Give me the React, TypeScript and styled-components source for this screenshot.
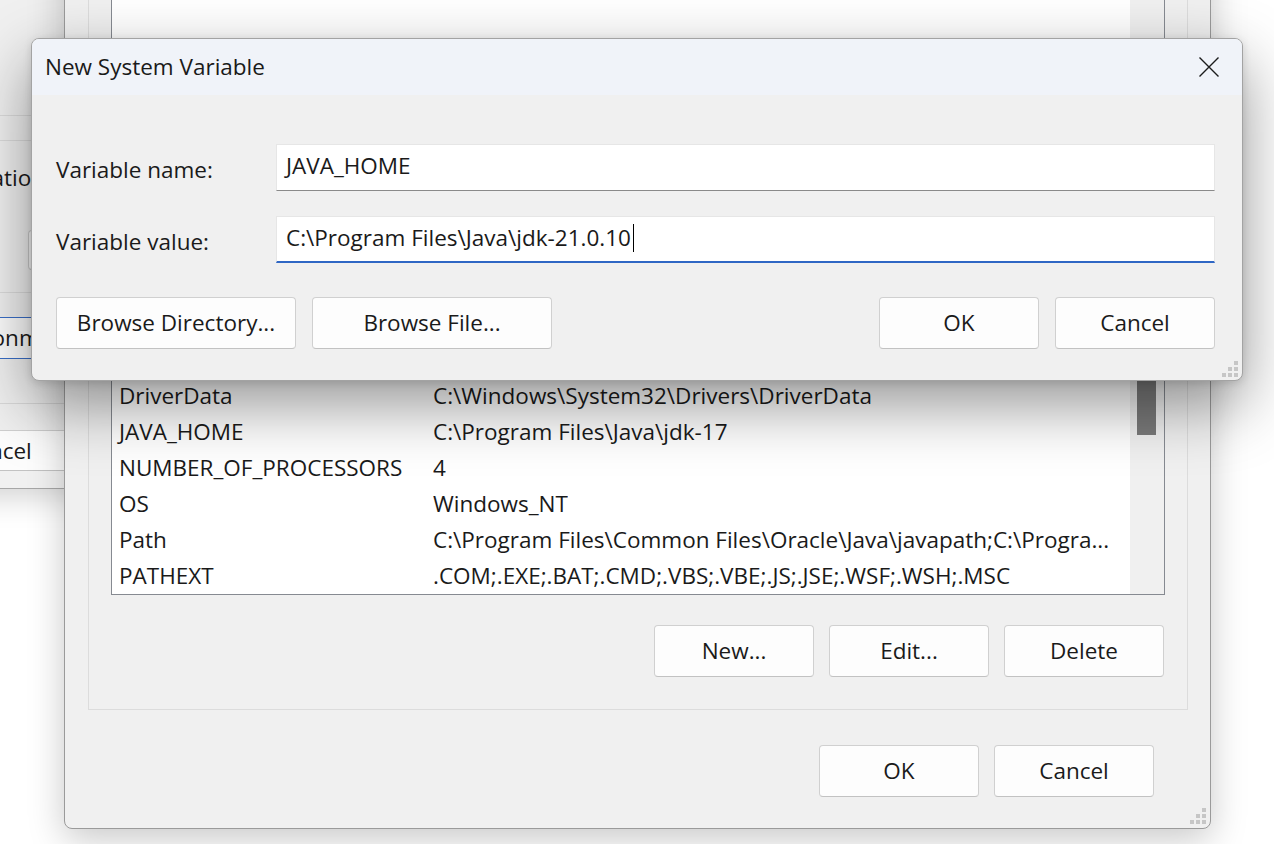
import styled, { createGlobalStyle } from "styled-components"

type EnvVar = { name: string; value: string }

const systemVars: EnvVar[] = [
    { name: "ComSpec", value: "C:\\Windows\\system32\\cmd.exe" },
    { name: "DriverData", value: "C:\\Windows\\System32\\Drivers\\DriverData" },
    { name: "JAVA_HOME", value: "C:\\Program Files\\Java\\jdk-17" },
    { name: "NUMBER_OF_PROCESSORS", value: "4" },
    { name: "OS", value: "Windows_NT" },
    { name: "Path", value: "C:\\Program Files\\Common Files\\Oracle\\Java\\javapath;C:\\Progra..." },
    { name: "PATHEXT", value: ".COM;.EXE;.BAT;.CMD;.VBS;.VBE;.JS;.JSE;.WSF;.WSH;.MSC" }
]

const GlobalStyle = createGlobalStyle`
    html, body {
        margin: 0;
        padding: 0;
        background: #ffffff;
    }
    body {
        font-family: "Open Sans", "Noto Sans", sans-serif;
    }
`

const Desktop = styled.div`
    position: relative;
    width: 1274px;
    height: 844px;
    overflow: hidden;
    background: #ffffff;
    color: #1a1a1a;
    font-family: "Open Sans", "Noto Sans", sans-serif;
    font-size: 22.5px;
    line-height: 30px;
`

const PushButton = styled.div<{ $w: number; $h?: number; $focus?: boolean; $left?: number }>`
    box-sizing: border-box;
    width: ${({ $w }) => $w}px;
    height: ${({ $h }) => $h ?? 52}px;
    flex-shrink: 0;
    margin-left: ${({ $left }) => ($left !== undefined ? `${$left}px` : "0")};
    display: flex;
    align-items: center;
    justify-content: center;
    white-space: nowrap;
    background: #fdfdfd;
    border: 1px solid ${({ $focus }) => ($focus ? "#3a6fc8" : "#d0d0d0")};
    border-bottom-color: ${({ $focus }) => ($focus ? "#3a6fc8" : "#c2c2c2")};
    border-radius: 4px;
    color: #1a1a1a;
`

/* System Properties window, sitting behind everything on the left */
const PropsWindow = styled.div`
    position: absolute;
    left: -330px;
    top: -40px;
    width: 640px;
    height: 529px;
    box-sizing: border-box;
    padding: 0 10px;
    background: #f0f0f0;
    border: 1px solid #a6a6a6;
    box-shadow: 0 8px 30px rgba(0, 0, 0, 0.18);
    display: flex;
    flex-direction: column;
`

const TabPage = styled.div`
    box-sizing: border-box;
    height: 443px;
    border: 1px solid #d9d9d9;
    border-top: none;
    display: flex;
    flex-direction: column;
    padding: 0 12px;
`

const PropsGroup = styled.div<{ $h: number; $top?: number }>`
    box-sizing: border-box;
    height: ${({ $h }) => $h}px;
    margin-top: ${({ $top }) => $top ?? 0}px;
    border: 1px solid #dcdcdc;
    border-top: ${({ $top }) => ($top ? "1px solid #dcdcdc" : "none")};
    display: flex;
    flex-direction: column;
    padding-top: 22px;
`

/* text block that ends at a fixed point and spills out to the left */
const PropsText = styled.div<{ $w: number }>`
    width: ${({ $w }) => $w}px;
    display: flex;
    justify-content: flex-end;
    white-space: nowrap;
`

const PropsButtons = styled.div`
    display: flex;
    margin-top: 26px;
`

/* Environment Variables window */
const EnvWindow = styled.div`
    position: absolute;
    left: 64px;
    top: -320px;
    width: 1147px;
    height: 1149px;
    box-sizing: border-box;
    padding: 0 22px 31px 23px;
    background: #f0f0f0;
    border: 1px solid #9a9a9a;
    border-radius: 0 0 8px 8px;
    box-shadow: 0 10px 36px rgba(0, 0, 0, 0.22);
    display: flex;
    flex-direction: column;
`

const GroupBox = styled.div`
    flex: 1;
    min-height: 0;
    border: 1px solid #dcdcdc;
    border-top: none;
    padding: 0 22px 32px 22px;
    display: flex;
    flex-direction: column;
`

const ListBox = styled.div`
    flex: 1;
    min-height: 0;
    display: flex;
    background: #ffffff;
    border: 1px solid #868a91;
`

const Rows = styled.div`
    flex: 1;
    min-width: 0;
    display: flex;
    flex-direction: column;
    justify-content: flex-end;
`

const Row = styled.div`
    height: 36px;
    flex-shrink: 0;
    display: flex;
    align-items: center;
    padding-left: 7px;
    white-space: nowrap;
    overflow: hidden;
`

const NameCell = styled.span`
    width: 314px;
    flex-shrink: 0;
`

const ValueCell = styled.span`
    overflow: hidden;
`

const ScrollTrack = styled.div`
    width: 34px;
    flex-shrink: 0;
    background: #f0f0f0;
    display: flex;
    flex-direction: column;
    justify-content: flex-end;
    padding-bottom: 159px;
`

const ScrollThumb = styled.div`
    height: 220px;
    margin: 0 8px 0 7px;
    background: #7a7a7a;
`

const ButtonRow = styled.div<{ $top: number; $right: number; $gap: number }>`
    display: flex;
    justify-content: flex-end;
    gap: ${({ $gap }) => $gap}px;
    margin-top: ${({ $top }) => $top}px;
    margin-right: ${({ $right }) => $right}px;
`

const Grip = styled.svg<{ $right: number; $bottom: number }>`
    position: absolute;
    right: ${({ $right }) => $right}px;
    bottom: ${({ $bottom }) => $bottom}px;
`

/* New System Variable dialog */
const Dialog = styled.div`
    position: absolute;
    left: 31px;
    top: 38px;
    width: 1212px;
    height: 343px;
    box-sizing: border-box;
    background: #f0f0f0;
    border: 1px solid #a3a3a3;
    border-radius: 8px;
    overflow: hidden;
    box-shadow: 0 24px 64px rgba(0, 0, 0, 0.42), 0 2px 8px rgba(0, 0, 0, 0.12);
    display: flex;
    flex-direction: column;
`

const TitleBar = styled.div`
    height: 56px;
    flex-shrink: 0;
    display: flex;
    align-items: center;
    justify-content: space-between;
    padding-left: 13px;
    background: #f0f3f9;
`

const CloseButton = styled.div`
    width: 66px;
    height: 56px;
    display: flex;
    align-items: center;
    justify-content: center;
`

const DialogBody = styled.div`
    display: flex;
    flex-direction: column;
    padding: 49px 27px 0 24px;
`

const FieldGrid = styled.div`
    display: grid;
    grid-template-columns: 220px 1fr;
    row-gap: 25px;
    align-items: center;
`

const FieldLabel = styled.div`
    padding-top: 4px;
`

const TextBox = styled.div<{ $focused?: boolean }>`
    box-sizing: border-box;
    height: 47px;
    display: flex;
    align-items: center;
    padding: 0 9px 3px;
    background: #ffffff;
    border: 1px solid #e6e6e6;
    border-bottom: ${({ $focused }) => ($focused ? "2px solid #2f67c4" : "1px solid #8a8a8a")};
    white-space: nowrap;
`

const Caret = styled.span`
    display: inline-block;
    width: 1px;
    height: 28px;
    margin-left: 2px;
    background: #000;
`

const DialogButtons = styled.div`
    display: flex;
    justify-content: space-between;
    margin-top: 34px;
`

const ButtonGroup = styled.div`
    display: flex;
    gap: 16px;
`

const GripDots = () => (
    <>
        <rect x="12" y="0" width="4" height="4" />
        <rect x="6" y="6" width="4" height="4" />
        <rect x="12" y="6" width="4" height="4" />
        <rect x="0" y="12" width="4" height="4" />
        <rect x="6" y="12" width="4" height="4" />
        <rect x="12" y="12" width="4" height="4" />
    </>
)

const App = () => {
    return (
        <>
            <GlobalStyle />
            <Desktop>
                <PropsWindow>
                    <TabPage>
                        <PropsGroup $h={155} />
                        <PropsGroup $h={153} $top={24}>
                            <PropsText $w={350}>System startup, system failure, and debugging information</PropsText>
                            <PushButton $w={160} $h={40} $left={333} style={{ marginTop: 37 }}>
                                Settings...
                            </PushButton>
                        </PropsGroup>
                        <PushButton $w={315} $h={42} $left={215} $focus style={{ marginTop: 24 }}>
                            Environment Variables...
                        </PushButton>
                    </TabPage>
                    <PropsButtons>
                        <PushButton $w={160} $h={41} $left={76}>
                            OK
                        </PushButton>
                        <PushButton $w={160} $h={41} $left={0}>
                            Cancel
                        </PushButton>
                    </PropsButtons>
                </PropsWindow>

                <EnvWindow>
                    <GroupBox>
                        <ListBox>
                            <Rows>
                                {systemVars.map((v) => (
                                    <Row key={v.name}>
                                        <NameCell>{v.name}</NameCell>
                                        <ValueCell>{v.value}</ValueCell>
                                    </Row>
                                ))}
                            </Rows>
                            <ScrollTrack>
                                <ScrollThumb />
                            </ScrollTrack>
                        </ListBox>
                        <ButtonRow $top={30} $right={1} $gap={15}>
                            <PushButton $w={160}>New...</PushButton>
                            <PushButton $w={160}>Edit...</PushButton>
                            <PushButton $w={160}>Delete</PushButton>
                        </ButtonRow>
                    </GroupBox>
                    <ButtonRow $top={35} $right={34} $gap={15}>
                        <PushButton $w={160}>OK</PushButton>
                        <PushButton $w={160}>Cancel</PushButton>
                    </ButtonRow>
                    <Grip $right={4} $bottom={4} width="16" height="16" viewBox="0 0 16 16" fill="#c6c6c6">
                        <GripDots />
                    </Grip>
                </EnvWindow>

                <Dialog>
                    <TitleBar>
                        <span>New System Variable</span>
                        <CloseButton>
                            <svg width="20" height="20" viewBox="0 0 20 20">
                                <path d="M0.5 0.5 L19.5 19.5 M19.5 0.5 L0.5 19.5" stroke="#1c1c1c" strokeWidth="1.4" fill="none" />
                            </svg>
                        </CloseButton>
                    </TitleBar>
                    <DialogBody>
                        <FieldGrid>
                            <FieldLabel>Variable name:</FieldLabel>
                            <TextBox>JAVA_HOME</TextBox>
                            <FieldLabel>Variable value:</FieldLabel>
                            <TextBox $focused>
                                C:\Program Files\Java\jdk-21.0.10
                                <Caret />
                            </TextBox>
                        </FieldGrid>
                        <DialogButtons>
                            <ButtonGroup>
                                <PushButton $w={240}>Browse Directory...</PushButton>
                                <PushButton $w={240}>Browse File...</PushButton>
                            </ButtonGroup>
                            <ButtonGroup>
                                <PushButton $w={160}>OK</PushButton>
                                <PushButton $w={160}>Cancel</PushButton>
                            </ButtonGroup>
                        </DialogButtons>
                    </DialogBody>
                    <Grip $right={4} $bottom={3} width="16" height="16" viewBox="0 0 16 16" fill="#c6c6c6">
                        <GripDots />
                    </Grip>
                </Dialog>
            </Desktop>
        </>
    )
}

export default App
